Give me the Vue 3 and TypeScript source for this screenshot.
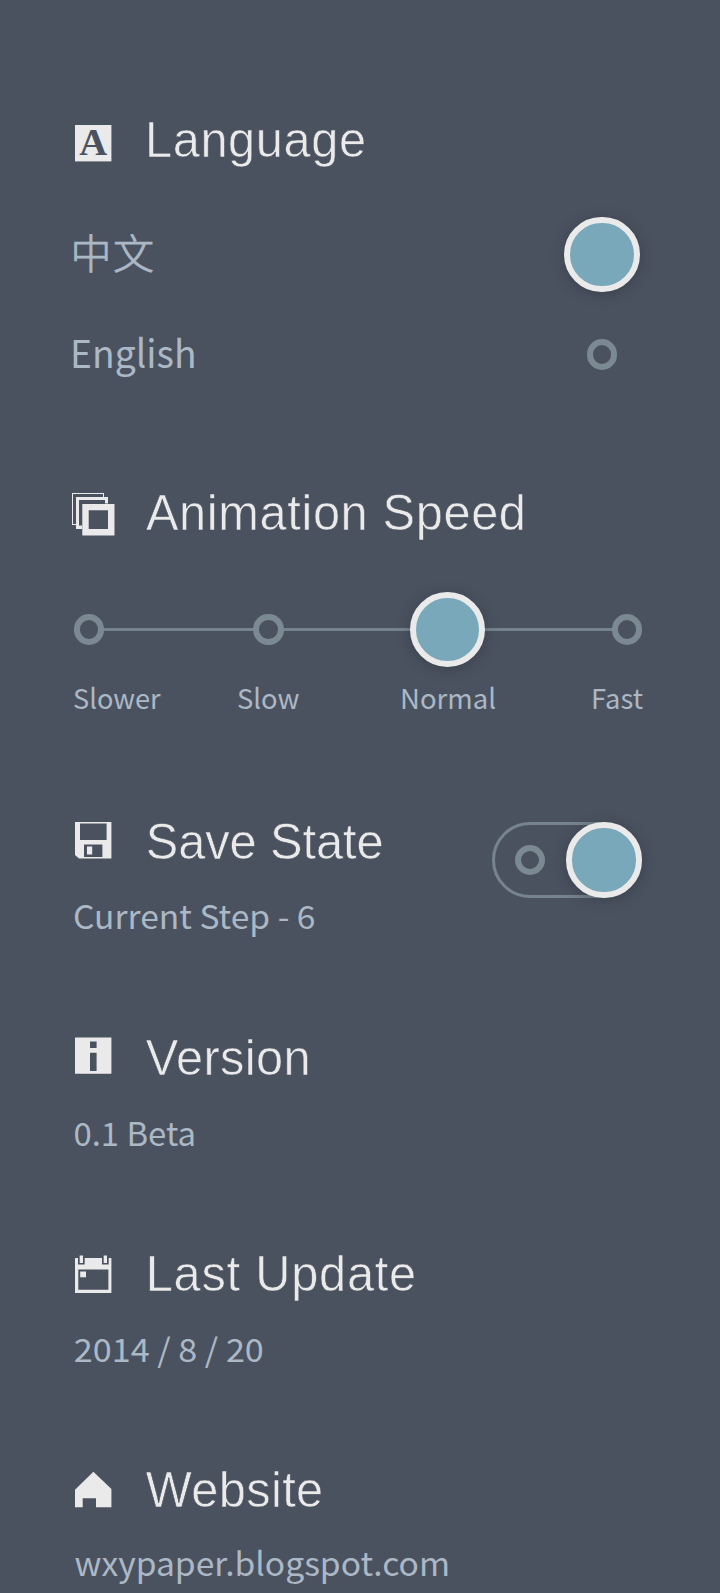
<script setup lang="ts">
import { ref } from 'vue'

interface Info {
  icon: 'save' | 'info' | 'calendar' | 'home'
  title: string
  titleWidth: number
  value: string
  valueWidth: number
  x: number
  y: number
}

const language = ref<'zh' | 'en'>('zh')
const speed = ref(2)
const saved = ref(true)

const speeds = [
  { name: 'Slower', width: 87.5 },
  { name: 'Slow', width: 62.5 },
  { name: 'Normal', width: 96 },
  { name: 'Fast', width: 52 },
]

// Titles are set slightly condensed, so their lengths are in unscaled units.
const condense = 0.965

const infos: Info[] = [
  { icon: 'save', title: 'Save State', titleWidth: 238, value: 'Current Step - 6', valueWidth: 242.5, x: 1, y: 36.2 },
  { icon: 'info', title: 'Version', titleWidth: 165, value: '0.1 Beta', valueWidth: 122.5, x: 1.5, y: 36.5 },
  { icon: 'calendar', title: 'Last Update', titleWidth: 270.5, value: '2014 / 8 / 20', valueWidth: 190, x: 1.8, y: 36.7 },
  { icon: 'home', title: 'Website', titleWidth: 177.5, value: 'wxypaper.blogspot.com', valueWidth: 375.5, x: 2.5, y: 35 },
]
</script>

<template>
  <main class="settings">
    <section class="language">
      <header class="head">
        <svg class="icon" viewBox="0 0 44 44">
          <rect x="3" y="1" width="36.4" height="36.4" />
          <text class="serif" x="7.3" y="31" textLength="28" lengthAdjust="spacingAndGlyphs">A</text>
        </svg>
        <svg class="title"><text x="0" y="45" :transform="`scale(${condense} 1)`" :textLength="221 / condense">Language</text></svg>
      </header>
      <div class="option first" @click="language = 'zh'">
        <svg class="name zh"><text x="-1.5" y="39.3" textLength="83.5" lengthAdjust="spacing">中文</text></svg>
        <span class="slot"><i :class="language === 'zh' ? 'knob' : 'ring'"></i></span>
      </div>
      <div class="option" @click="language = 'en'">
        <svg class="name"><text x="-2" y="38.3" textLength="126.5" lengthAdjust="spacingAndGlyphs">English</text></svg>
        <span class="slot"><i :class="language === 'en' ? 'knob' : 'ring'"></i></span>
      </div>
    </section>

    <section class="animation">
      <header class="head">
        <svg class="icon" viewBox="0 0 44 44">
          <path d="M0 0H32V4H31V1H1V31H4V32H0Z" />
          <path d="M4 4H36V10.5H33V7H7V32.5H10V36H4Z" />
          <path fill-rule="evenodd" d="M10.3 11H42.5V42.6H10.3ZM16.7 17.2V36H36V17.2Z" />
        </svg>
        <svg class="title"><text x="1" y="45.5" :transform="`scale(${condense} 1)`" :textLength="380 / condense">Animation Speed</text></svg>
      </header>
      <div class="track">
        <span v-for="(s, i) in speeds" :key="s.name" class="stop" @click="speed = i">
          <i :class="speed === i ? 'knob' : 'ring'"></i>
        </span>
      </div>
      <div class="labels">
        <span v-for="s in speeds" :key="s.name" class="stop">
          <svg :width="s.width" height="40">
            <text x="0" y="29" :textLength="s.width" lengthAdjust="spacingAndGlyphs">{{ s.name }}</text>
          </svg>
        </span>
      </div>
    </section>

    <section v-for="item in infos" :key="item.icon" class="info">
      <div class="copy">
        <header class="head">
          <svg class="icon" viewBox="0 0 44 44">
            <path v-if="item.icon === 'save'" fill-rule="evenodd" d="M3 8H39.4V44.5H7L3 41ZM8 9.5V26H34.6V9.5ZM12 30.5V43H30.4V30.5ZM15 32.4H20.2V40.6H15Z" />
            <path v-else-if="item.icon === 'info'" fill-rule="evenodd" d="M3 7.4H39.4V43.7H3ZM18 11.5V18H24.6V11.5ZM18 22.7V41H24.6V22.7Z" />
            <g v-else-if="item.icon === 'calendar'">
              <path fill-rule="evenodd" d="M3 12H6V18.5H12.7V12H30V18.5H36.7V12H39.4V47H3ZM6.3 23.5V43.8H36.4V23.5Z" />
              <path d="M7.7 9.5H11V17H7.7ZM31.7 9.5H35V17H31.7ZM8.2 25.5H14V31.3H8.2Z" />
            </g>
            <path v-else d="M21.4 9.7L39.4 27V45.3H24V36.2H10.7V45.3H3V27.7Z" />
          </svg>
          <svg class="title"><text x="0.7" y="45.4" :transform="`scale(${condense} 1)`" :textLength="item.titleWidth / condense">{{ item.title }}</text></svg>
        </header>
        <svg class="value"><text :x="item.x" :y="item.y" :textLength="item.valueWidth" lengthAdjust="spacingAndGlyphs">{{ item.value }}</text></svg>
      </div>
      <div v-if="item.icon === 'save'" class="switch" @click="saved = !saved">
        <span class="slot"><i :class="saved ? 'ring' : 'knob'"></i></span>
        <span class="slot"><i :class="saved ? 'knob' : 'ring'"></i></span>
      </div>
    </section>
  </main>
</template>

<style>
body {
  margin: 0;
  background: #4b525f;
}
</style>

<style scoped>
.settings {
  box-sizing: border-box;
  width: 720px;
  height: 1593px;
  padding: 112px 78px 0 72px;
  overflow: hidden;
  background: #4b525f;
  font-family: "Noto Sans CJK SC", "Noto Sans", sans-serif;
}
svg {
  display: block;
  flex: none;
  overflow: visible;
}
.language {
  height: 372px;
}
.animation {
  height: 330px;
}
.head {
  display: flex;
  height: 60px;
}
.icon {
  width: 44px;
  height: 44px;
  flex: none;
  fill: #eaeaea;
}
.language .icon {
  margin-top: 12px;
}
.animation .icon {
  margin-top: 9px;
}
.icon .serif {
  font: bold 37px "Liberation Serif", serif;
  fill: #4b525f;
}
.title {
  height: 60px;
  margin-left: 29px;
  font: 50.5px "Liberation Sans", Arial, sans-serif;
  fill: #eaeaea;
  stroke: #4b525f;
  stroke-width: 0.6px;
}
.name,
.value,
.labels {
  fill: #abb8c5;
}
.option {
  display: flex;
  justify-content: space-between;
  align-items: center;
  height: 50px;
  margin-top: 50px;
  padding-right: 2px;
}
.option.first {
  margin-top: 57.5px;
}
.name {
  width: 140px;
  height: 50px;
  font-size: 38.5px;
}
.name.zh {
  font-size: 41px;
  font-weight: 300;
  stroke: #abb8c5;
  stroke-width: 0.8px;
}
.slot {
  display: flex;
  flex: none;
  width: 76px;
  height: 76px;
  align-items: center;
  justify-content: center;
}
.ring,
.knob {
  display: block;
  box-sizing: border-box;
  flex: none;
  border-radius: 50%;
}
.ring {
  width: 30.4px;
  height: 30.4px;
  border: 6px solid #7a8992;
  background: #4b525f;
}
.knob {
  width: 75.6px;
  height: 75.6px;
  border: 6px solid #eaeaea;
  background: #78a8b9;
  box-shadow: 0 2px 14px rgba(30, 35, 48, 0.35);
}
.track {
  display: flex;
  justify-content: space-between;
  align-items: center;
  height: 76px;
  margin: 47.5px 0 0 2px;
  background: linear-gradient(#75848e, #75848e) center / calc(100% - 30px) 3px no-repeat;
}
.stop {
  display: flex;
  width: 30px;
  justify-content: center;
}
.labels {
  display: flex;
  justify-content: space-between;
  margin: 12.5px -1px 0 1px;
  font-size: 27.5px;
}
.labels .stop:first-child {
  justify-content: flex-start;
}
.labels .stop:last-child {
  justify-content: flex-end;
}
.info {
  display: flex;
  justify-content: space-between;
  height: 216px;
}
.value {
  height: 50px;
  margin-top: 19px;
  font-size: 32.4px;
}
.switch {
  display: flex;
  box-sizing: border-box;
  flex: none;
  width: 150px;
  height: 76px;
  margin-top: 8px;
  border: 3px solid #75848e;
  border-radius: 38px;
  align-items: center;
  justify-content: space-between;
}
.switch .slot {
  margin: 0 -3px;
}
</style>
